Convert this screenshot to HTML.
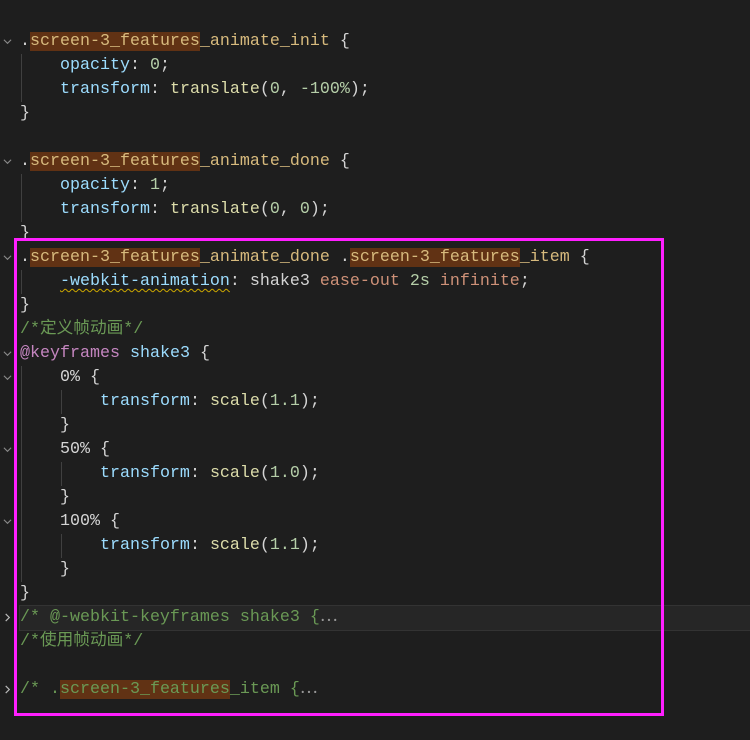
<!DOCTYPE html>
<html><head><meta charset="utf-8"><style>
html,body{margin:0;padding:0;background:#1e1e1e;width:750px;height:740px;overflow:hidden}
.ed{position:absolute;left:0;top:6px;width:750px}
.l{position:relative;height:24px;line-height:24px;white-space:pre;font-family:"Liberation Mono","Noto Sans CJK SC",monospace;font-size:16.67px;color:#d4d4d4;padding-left:20px}
.s{color:#d7ba7d}.p{color:#9cdcfe}.v{color:#ce9178}.n{color:#b5cea8}.c{color:#6a9955}.k{color:#c586c0}.f{color:#dcdcaa}
.h{background:#613214}
.w{text-decoration:underline wavy #cca700;text-decoration-thickness:1px;text-underline-offset:3px}
.ch{position:absolute;left:3px;top:7px;width:9px;height:9px}
.g{position:absolute;top:0;width:1px;height:24px;background:#404040}
.fold{background:#262626;outline:1px solid #333}
.box{position:absolute;left:14px;top:238px;width:644px;height:472px;border:3px solid #ff1fff}
</style></head><body>
<svg width="0" height="0" style="position:absolute"><defs>
<symbol id="dn" viewBox="0 0 10 10"><path d="M1 3 L5 7 L9 3" fill="none" stroke="#8a8a8a" stroke-width="1.2"/></symbol>
<symbol id="rt" viewBox="0 0 10 10"><path d="M3 1 L7 5 L3 9" fill="none" stroke="#bbb" stroke-width="1.3"/></symbol>
</defs></svg>
<div class="ed">
<div class="l"></div>
<div class="l"><svg class="ch"><use href="#dn"/></svg>.<span class="s h">screen-3_features</span><span class="s">_animate_init</span> {</div>
<div class="l"><span class="g" style="left:21px"></span>    <span class="p">opacity</span>: <span class="n">0</span>;</div>
<div class="l"><span class="g" style="left:21px"></span>    <span class="p">transform</span>: <span class="f">translate</span>(<span class="n">0</span>, <span class="n">-100%</span>);</div>
<div class="l">}</div>
<div class="l"></div>
<div class="l"><svg class="ch"><use href="#dn"/></svg>.<span class="s h">screen-3_features</span><span class="s">_animate_done</span> {</div>
<div class="l"><span class="g" style="left:21px"></span>    <span class="p">opacity</span>: <span class="n">1</span>;</div>
<div class="l"><span class="g" style="left:21px"></span>    <span class="p">transform</span>: <span class="f">translate</span>(<span class="n">0</span>, <span class="n">0</span>);</div>
<div class="l">}</div>
<div class="l"><svg class="ch"><use href="#dn"/></svg>.<span class="s h">screen-3_features</span><span class="s">_animate_done</span> .<span class="s h">screen-3_features</span><span class="s">_item</span> {</div>
<div class="l"><span class="g" style="left:21px"></span>    <span class="p w">-webkit-animation</span>: shake3 <span class="v">ease-out</span> <span class="n">2s</span> <span class="v">infinite</span>;</div>
<div class="l">}</div>
<div class="l"><span class="c">/*定义帧动画*/</span></div>
<div class="l"><svg class="ch"><use href="#dn"/></svg><span class="k">@keyframes</span> <span class="p">shake3</span> {</div>
<div class="l"><svg class="ch"><use href="#dn"/></svg><span class="g" style="left:21px"></span>    0% {</div>
<div class="l"><span class="g" style="left:21px"></span><span class="g" style="left:61px"></span>        <span class="p">transform</span>: <span class="f">scale</span>(<span class="n">1.1</span>);</div>
<div class="l"><span class="g" style="left:21px"></span>    }</div>
<div class="l"><svg class="ch"><use href="#dn"/></svg><span class="g" style="left:21px"></span>    50% {</div>
<div class="l"><span class="g" style="left:21px"></span><span class="g" style="left:61px"></span>        <span class="p">transform</span>: <span class="f">scale</span>(<span class="n">1.0</span>);</div>
<div class="l"><span class="g" style="left:21px"></span>    }</div>
<div class="l"><svg class="ch"><use href="#dn"/></svg><span class="g" style="left:21px"></span>    100% {</div>
<div class="l"><span class="g" style="left:21px"></span><span class="g" style="left:61px"></span>        <span class="p">transform</span>: <span class="f">scale</span>(<span class="n">1.1</span>);</div>
<div class="l"><span class="g" style="left:21px"></span>    }</div>
<div class="l">}</div>
<div class="l fold" style="margin-left:20px;padding-left:0"><svg class="ch" style="left:-17px"><use href="#rt"/></svg><span class="c">/* @-webkit-keyframes shake3 {</span><span style="color:#999">⋯</span></div>
<div class="l"><span class="c">/*使用帧动画*/</span></div>
<div class="l"></div>
<div class="l"><svg class="ch"><use href="#rt"/></svg><span class="c">/* .</span><span class="c h">screen-3_features</span><span class="c">_item {</span><span style="color:#999">⋯</span></div>
</div>
<div class="box"></div>
</body></html>
